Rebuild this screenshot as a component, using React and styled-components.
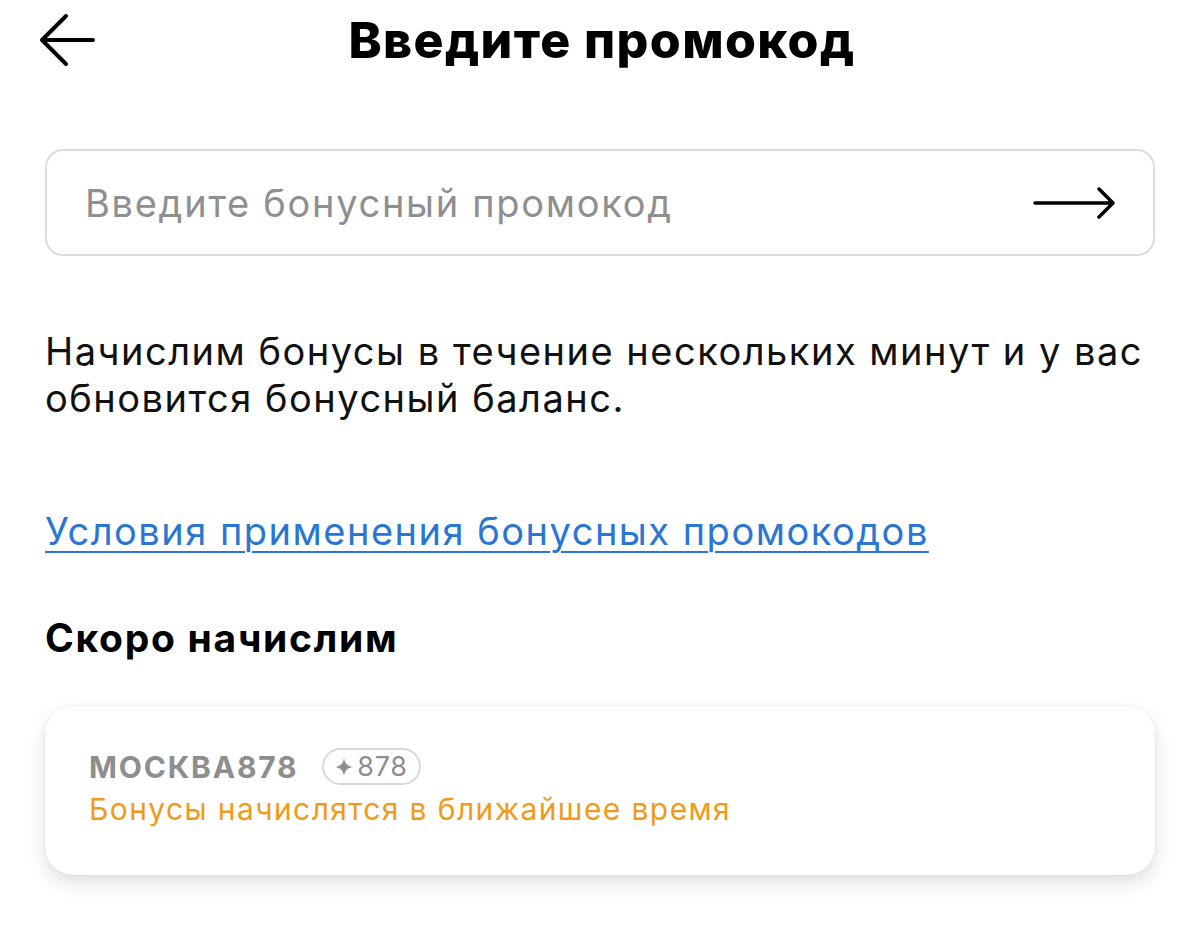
import React from "react";
import styled, { createGlobalStyle } from "styled-components";

const GlobalStyle = createGlobalStyle`
  html, body {
    margin: 0;
    padding: 0;
    background: #fff;
  }
  body {
    font-family: Inter, "Noto Sans", sans-serif;
    color: #111;
  }
`;

const Page = styled.div`
  width: 1200px;
  height: 945px;
  box-sizing: border-box;
  padding: 0 45px;
  display: flex;
  flex-direction: column;
  overflow: hidden;
`;

const Header = styled.header`
  height: 80px;
  display: grid;
  grid-template-columns: 60px 1fr 60px;
  align-items: center;
  margin-left: -6px;
`;

const IconButton = styled.button`
  border: 0;
  background: none;
  padding: 0;
  width: 60px;
  height: 60px;
  display: flex;
  align-items: center;
  justify-content: flex-start;
  cursor: pointer;
`;

const Title = styled.h1`
  margin: 0 0 0 10px;
  text-align: center;
  font-size: 50px;
  font-weight: 800;
  letter-spacing: 1.4px;
  color: #000;
`;

const InputBox = styled.label`
  margin-top: 69px;
  height: 107px;
  box-sizing: border-box;
  border: 2px solid #dcdcdc;
  border-radius: 18px;
  display: flex;
  align-items: center;
  padding: 0 38px 0 36px;
`;

const Input = styled.input`
  flex: 1;
  border: 0;
  outline: none;
  background: none;
  font-family: inherit;
  font-size: 38px;
  letter-spacing: 1.7px;
  color: #111;
  &::placeholder {
    color: #8f8f8f;
  }
`;

const Text = styled.p`
  margin: 72px 0 0;
  font-size: 38px;
  letter-spacing: 1.5px;
  line-height: 47px;
  color: #111;
`;

const Link = styled.a`
  margin-top: 86px;
  font-size: 38px;
  letter-spacing: 1.5px;
  line-height: 47px;
  color: #2a76d2;
  text-decoration: underline;
  text-decoration-thickness: 2px;
  text-underline-offset: 6px;
  align-self: flex-start;
`;

const SectionTitle = styled.h2`
  margin: 59px 0 0;
  font-size: 39px;
  font-weight: 700;
  letter-spacing: 1.7px;
  color: #000;
`;

const Card = styled.div`
  margin-top: 45px;
  height: 169px;
  box-sizing: border-box;
  border-radius: 28px;
  background: #fff;
  box-shadow: 0 8px 18px rgba(0, 0, 0, 0.13), 0 0 3px rgba(0, 0, 0, 0.07);
  padding: 42px 44px 0;
  display: flex;
  flex-direction: column;
  gap: 6px;
`;

const CodeRow = styled.div`
  display: flex;
  align-items: center;
  gap: 24px;
`;

const Code = styled.span`
  font-size: 30px;
  font-weight: 700;
  color: #8e8e8e;
  letter-spacing: 1.8px;
`;

const Badge = styled.span`
  display: inline-flex;
  align-items: center;
  gap: 4px;
  height: 37px;
  box-sizing: border-box;
  padding: 0 12px 0 11px;
  border: 2px solid #d9d9d9;
  border-radius: 19px;
  font-size: 27px;
  letter-spacing: 0.6px;
  color: #8e8e8e;
`;

const Status = styled.span`
  font-size: 30px;
  letter-spacing: 1.4px;
  color: ${({ tone }) => (tone === "warn" ? "#f09a1a" : "#8e8e8e")};
`;

const BackArrow = () => (
  <svg width="56" height="54" viewBox="0 0 56 54" fill="none">
    <path
      d="M54 27H4M27 3L3 27L27 51"
      stroke="#000"
      strokeWidth="4"
      strokeLinecap="round"
      strokeLinejoin="round"
    />
  </svg>
);

const SendArrow = () => (
  <svg width="82" height="34" viewBox="0 0 82 34" fill="none">
    <path
      d="M2 17H79M66 3L80 17L66 31"
      stroke="#000"
      strokeWidth="3.5"
      strokeLinecap="round"
      strokeLinejoin="round"
    />
  </svg>
);

const Sparkle = () => (
  <svg width="18" height="18" viewBox="0 0 18 18">
    <path
      d="M9 0C9.8 5.5 12.5 8.2 18 9C12.5 9.8 9.8 12.5 9 18C8.2 12.5 5.5 9.8 0 9C5.5 8.2 8.2 5.5 9 0Z"
      fill="#8e8e8e"
    />
  </svg>
);

export default function App() {
  return (
    <>
      <GlobalStyle />
      <Page>
        <Header>
          <IconButton aria-label="Назад">
            <BackArrow />
          </IconButton>
          <Title>Введите промокод</Title>
          <span />
        </Header>

        <InputBox>
          <Input placeholder="Введите бонусный промокод" />
          <SendArrow />
        </InputBox>

        <Text>
          Начислим бонусы в течение нескольких минут и у вас
          <br />
          обновится бонусный баланс.
        </Text>

        <Link href="#">Условия применения бонусных промокодов</Link>

        <SectionTitle>Скоро начислим</SectionTitle>

        <Card>
          <CodeRow>
            <Code>МОСКВА878</Code>
            <Badge>
              <Sparkle />
              878
            </Badge>
          </CodeRow>
          <Status tone="warn">Бонусы начислятся в ближайшее время</Status>
        </Card>
      </Page>
    </>
  );
}
